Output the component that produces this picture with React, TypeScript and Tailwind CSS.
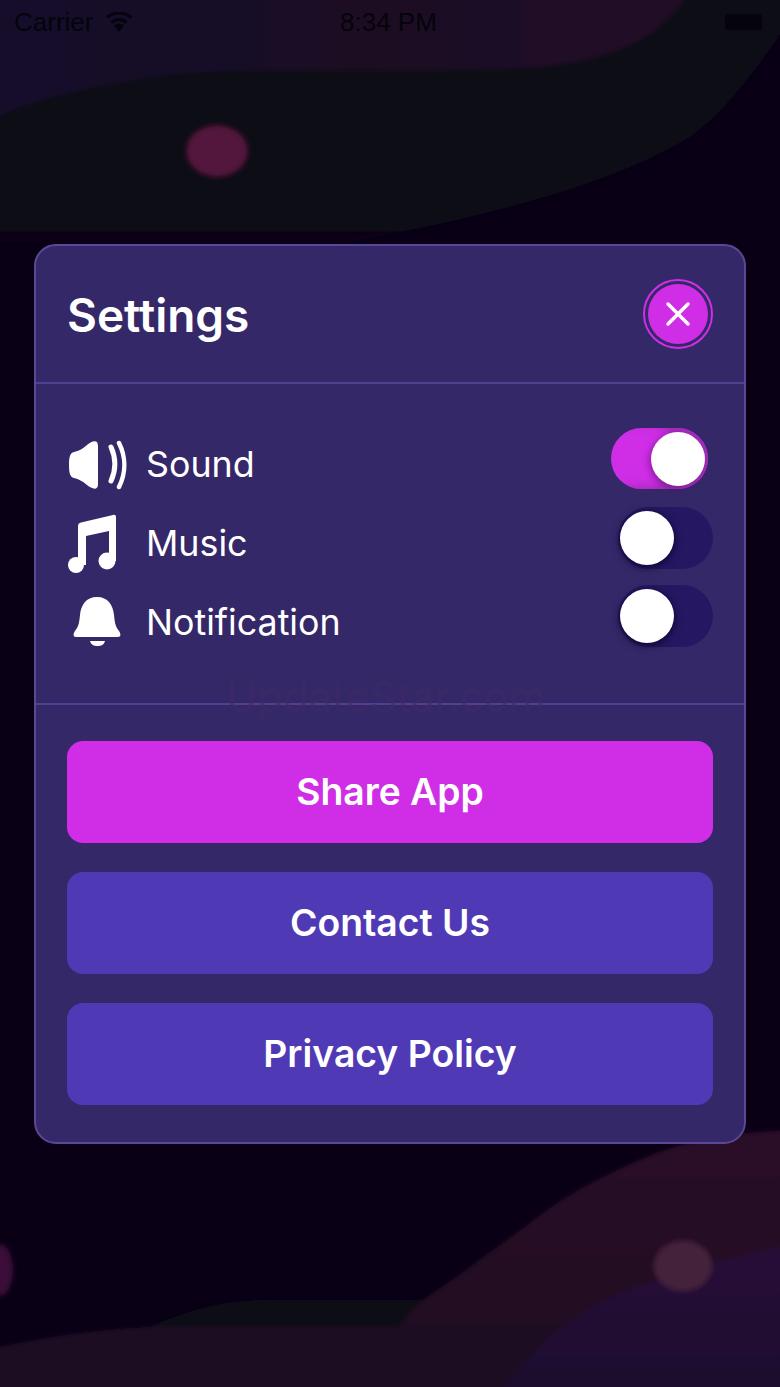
import React from 'react';

function Background() {
  return (
    <svg className="absolute inset-0" width="780" height="1387" viewBox="0 0 780 1387">
      <defs>
        <filter id="soft" x="-10%" y="-10%" width="120%" height="120%">
          <feGaussianBlur stdDeviation="2.5" />
        </filter>
        <linearGradient id="darkFade" x1="0" y1="120" x2="0" y2="245" gradientUnits="userSpaceOnUse">
          <stop offset="0" stopColor="#0c0a18" />
          <stop offset="0.85" stopColor="#0b0917" />
          <stop offset="1" stopColor="#090016" />
        </linearGradient>
        <linearGradient id="topWave" x1="0" y1="0" x2="700" y2="0" gradientUnits="userSpaceOnUse">
          <stop offset="0" stopColor="#15082a" />
          <stop offset="0.5" stopColor="#1b0a24" />
          <stop offset="1" stopColor="#240a26" />
        </linearGradient>
        <linearGradient id="bottomWave" x1="0" y1="1130" x2="0" y2="1387" gradientUnits="userSpaceOnUse">
          <stop offset="0" stopColor="#2b0a26" />
          <stop offset="0.6" stopColor="#230a24" />
          <stop offset="1" stopColor="#1a0c20" />
        </linearGradient>
        <linearGradient id="purpleWave" x1="0" y1="1250" x2="0" y2="1387" gradientUnits="userSpaceOnUse">
          <stop offset="0" stopColor="#280c38" />
          <stop offset="1" stopColor="#1d0c2e" />
        </linearGradient>
      </defs>
      <rect width="780" height="1387" fill="#090016" />
      <g filter="url(#soft)">
        <path d="M-10 -10H790V20C750 80 720 115 690 137C620 180 500 215 348 242H-10Z" fill="url(#darkFade)" />
        <path d="M-10 -10H690C660 40 610 66 497 69C380 72 220 66 150 77C90 88 40 95 -10 120Z" fill="url(#topWave)" />
        <ellipse cx="217" cy="151" rx="30" ry="25" fill="#52163c" />
        <path d="M149 1327C190 1310 220 1300 270 1300H430L420 1345H149Z" fill="#0e0b17" />
        <path d="M790 1130C740 1132 690 1138 647 1157C610 1172 575 1190 547 1210C500 1245 460 1275 423 1300C412 1310 405 1320 398 1327H149C90 1330 40 1338 -10 1349V1397H790Z" fill="url(#bottomWave)" />
        <ellipse cx="0" cy="1270" rx="13" ry="26" fill="#3a0d39" />
        <path d="M497 1397C530 1350 550 1335 572 1320C600 1300 625 1290 647 1283C690 1268 740 1255 790 1245V1397Z" fill="url(#purpleWave)" />
        <ellipse cx="683" cy="1266" rx="29" ry="25" fill="#45203a" />
      </g>
    </svg>
  );
}

function SpeakerIcon() {
  return (
    <svg width="60" height="50" viewBox="0 0 60 50" className="ml-[2px] shrink-0">
      <path d="M5 12C10 11 13 9 18 5C23 1 29 -1 29 6V44C29 51 23 49 18 45C13 41 10 39 5 38C1 37 0 33 0 25C0 17 1 13 5 12Z" fill="white" />
      <path d="M42 7C47 18 47 30 42 41" fill="none" stroke="white" strokeWidth="5" strokeLinecap="round" />
      <path d="M50 3C57 17 57 33 50 47" fill="none" stroke="white" strokeWidth="4.5" strokeLinecap="round" />
    </svg>
  );
}

function MusicIcon() {
  return (
    <svg width="60" height="60" viewBox="0 0 60 60" className="ml-[1px] shrink-0">
      <circle cx="8" cy="51" r="8" fill="white" />
      <circle cx="39" cy="47" r="8.5" fill="white" />
      <path d="M10 12C10 10 11 9 13 8.5L45 1C47 0.5 48 1.5 48 3V47H41V17L18 22V51H10Z" fill="white" />
    </svg>
  );
}

function BellIcon() {
  return (
    <svg width="60" height="52" viewBox="0 0 60 52" className="shrink-0">
      <path d="M30 0C41 0 46 8 47 18C48 28 49 30 52 34C54 37 54 40 51 40H9C6 40 6 37 8 34C11 30 12 28 13 18C14 8 19 0 30 0Z" fill="white" />
      <path d="M23 44H38C37 48 34 49 30.5 49C27 49 24 48 23 44Z" fill="white" />
    </svg>
  );
}

function Row({ icon, label, on, top }: { icon: React.ReactNode; label: string; on?: boolean; top: string }) {
  return (
    <div className="flex h-[79px] items-center">
      <div className="flex w-[79px] justify-start">{icon}</div>
      <span className="text-[35.8px] leading-none text-white">{label}</span>
      {on ? (
        <div className={`ml-auto mr-[5px] flex h-[61px] w-[97px] items-center justify-end self-start rounded-full bg-[#cf2ee6] pr-[3px] shadow-[inset_-30px_-3px_10px_#a52cbb] ${top}`}>
          <div className="h-[54px] w-[54px] rounded-full bg-white shadow-[-2px_2px_6px_rgba(80,10,100,0.5)]" />
        </div>
      ) : (
        <div className={`ml-auto flex h-[62px] w-[95px] items-center self-start rounded-full bg-[#261763] pl-[2px] ${top}`}>
          <div className="h-[54px] w-[54px] rounded-full bg-white shadow-[0_2px_8px_rgba(8,2,40,0.9)]" />
        </div>
      )}
    </div>
  );
}

function ActionButton({ label, primary }: { label: string; primary?: boolean }) {
  return (
    <button className={`flex h-[101.5px] w-full items-center justify-center rounded-[16px] text-[37.3px] font-semibold text-white ${primary ? 'bg-[#cf2ee6]' : 'bg-[#5039b5]'}`}>
      {label}
    </button>
  );
}

export default function App() {
  return (
    <div className="relative h-[1387px] w-[780px] overflow-hidden bg-[#090016] [font-family:Inter,sans-serif]">
      <Background />

      <div className="relative flex h-[42px] items-center justify-between pl-[14px] pr-[18px] pt-[2px] text-[26px] text-[#05030c] [font-family:'Liberation_Sans',sans-serif]">
        <div className="flex items-center gap-[12px]">
          <span>Carrier</span>
          <svg width="28" height="20" viewBox="0 0 28 20">
            <path d="M14 20L9 13.5C12 11 16 11 19 13.5Z" fill="#05030c" />
            <path d="M6.5 10.5C11 6.5 17 6.5 21.5 10.5" fill="none" stroke="#05030c" strokeWidth="3" />
            <path d="M2 5.5C9 -0.5 19 -0.5 26 5.5" fill="none" stroke="#05030c" strokeWidth="3" />
          </svg>
        </div>
        <span className="absolute left-[340px]">8:34 PM</span>
        <div className="h-[16px] w-[37px] rounded-[3px] bg-[#05030c]" />
      </div>

      <div className="relative ml-[34px] mt-[202px] h-[900px] w-[712px] rounded-[22px] border-2 border-[#5a4896] bg-[#352869]">
        <header className="flex h-[136px] items-center justify-between pl-[31px] pr-[31px]">
          <h1 className="pt-[2px] text-[46px] font-semibold leading-none text-white">Settings</h1>
          <div className="flex h-[70px] w-[70px] items-center justify-center rounded-full border-2 border-[#cf2ee6]">
            <div className="flex h-[60px] w-[60px] items-center justify-center rounded-full bg-[#cf2ee6]">
              <svg width="26" height="26" viewBox="0 0 26 26">
                <path d="M3 3L23 23M23 3L3 23" stroke="white" strokeWidth="3.5" strokeLinecap="round" />
              </svg>
            </div>
          </div>
        </header>

        <div className="h-[2px] bg-[#51408f]" />

        <section className="px-[31px] py-[41px]">
          <Row icon={<SpeakerIcon />} label="Sound" on top="mt-[3px]" />
          <Row icon={<MusicIcon />} label="Music" top="mt-[3px]" />
          <Row icon={<BellIcon />} label="Notification" top="mt-[2px]" />
        </section>

        <div className="h-[2px] bg-[#51408f]" />

        <section className="flex flex-col gap-[29.5px] px-[31px] pt-[36px]">
          <ActionButton label="Share App" primary />
          <ActionButton label="Contact Us" />
          <ActionButton label="Privacy Policy" />
        </section>

        <span className="pointer-events-none absolute left-[190px] top-[430px] text-[42px] leading-none text-[#3f2a66] opacity-60">UpdateStar.com</span>
      </div>
    </div>
  );
}
